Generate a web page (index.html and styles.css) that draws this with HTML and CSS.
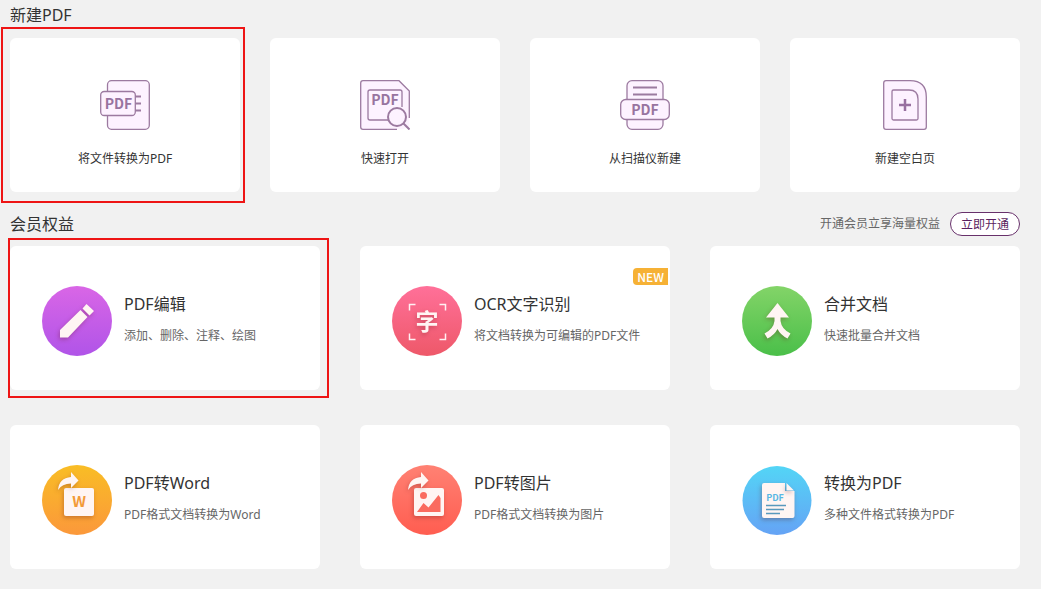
FILE: index.html
```html
<!DOCTYPE html>
<html lang="zh-CN">
<head>
<meta charset="utf-8">
<meta name="viewport" content="width=device-width, initial-scale=1">
<title>新建PDF</title>
<link rel="stylesheet" href="styles.css">
</head>
<body>
<main class="home">
  <section>
    <header class="section-head section-head-first">
      <h2 class="section-title">新建PDF</h2>
    </header>
    <div class="create-grid">
      <button class="card create-card marked marked-create" type="button">
        <svg class="create-icon" viewBox="0 0 50 50" aria-hidden="true">
          <rect class="sheet" x="7.5" y="0.7" width="41.8" height="48.6" rx="4"/>
          <path class="mark" d="M35 16.5h6M35 23.5h6M35 30.5h6"/>
          <rect class="sheet" x="0.7" y="11.5" width="34.6" height="24" rx="3.5"/>
          <text class="icon-text" x="18.500" y="28.5">PDF</text>
        </svg>
        <span>将文件转换为PDF</span>
      </button>
      <button class="card create-card" type="button">
        <svg class="create-icon" viewBox="0 0 50 50" aria-hidden="true">
          <path class="fill" d="M3 .7h36L49.3 11v36L42 49.3H3q-2.300 0-2.300-2.300V3Q.7.7 3 .7z"/>
          <path class="line" d="M49.300 38V11L39 .7H3Q.7.7.7 3v44q0 2.300 2.300 2.300h34"/>
          <path class="line" d="M42 27V12q0-2-2-2H10q-2 0-2 2v26q0 2 2 2h18"/>
          <text class="icon-text" x="25" y="25">PDF</text>
          <circle class="lens" cx="37" cy="37" r="9"/>
          <path class="mark" d="M43.500 43.500l6 6"/>
        </svg>
        <span>快速打开</span>
      </button>
      <button class="card create-card" type="button">
        <svg class="create-icon" viewBox="0 0 50 50" aria-hidden="true">
          <rect class="sheet" x="7" y="0.7" width="36" height="48.6" rx="5"/>
          <path class="mark" d="M13 7.500h24M13 14.500h24"/>
          <rect class="sheet" x="0.7" y="19.5" width="48.6" height="20" rx="5"/>
          <text class="icon-text" x="25" y="35">PDF</text>
        </svg>
        <span>从扫描仪新建</span>
      </button>
      <button class="card create-card" type="button">
        <svg class="create-icon" viewBox="0 0 50 50" aria-hidden="true">
          <path class="sheet" d="M6 .7h24Q46.300.7 46.300 17v30q0 2.300-2.300 2.300H6q-2.300 0-2.300-2.300V3Q3.700.7 6 .7z"/>
          <path class="sheet" d="M13.500 10H29q9 0 9 9v19.500q0 1.500-1.500 1.500h-23q-1.500 0-1.500-1.500v-27q0-1.500 1.500-1.500z"/>
          <path class="plus" d="M25 19v12M19 25h12"/>
        </svg>
        <span>新建空白页</span>
      </button>
    </div>
  </section>

  <section>
    <header class="section-head">
      <h2 class="section-title">会员权益</h2>
      <div class="offer">
        <span class="offer-text">开通会员立享海量权益</span>
        <button class="offer-button" type="button">立即开通</button>
      </div>
    </header>
    <div class="member-grid">
      <button class="card member-card marked marked-member" type="button">
        <svg class="member-icon" viewBox="0 0 70 70" aria-hidden="true">
          <defs><linearGradient id="purple" x2="0" y2="1"><stop stop-color="#d966e6"/><stop offset="1" stop-color="#b054e8"/></linearGradient></defs>
          <circle cx="35" cy="35" r="35" fill="url(#purple)"/>
          <g class="raised"><path d="M18 44L38.500 24l7 7L26 51.500h-8zM40.500 22.500l4-4.500 7.500 7-4.500 4.500z"/></g>
        </svg>
        <span class="member-copy"><span class="member-title">PDF编辑</span><span class="member-desc">添加、删除、注释、绘图</span></span>
      </button>
      <button class="card member-card" type="button">
        <svg class="member-icon" viewBox="0 0 70 70" aria-hidden="true">
          <defs><linearGradient id="pink" x2="0" y2="1"><stop stop-color="#ff7099"/><stop offset="1" stop-color="#ee5869"/></linearGradient></defs>
          <circle cx="35" cy="35" r="35" fill="url(#pink)"/>
          <path class="corners" d="M17.500 24.500v-6h6M47.500 18.500h6v6M17.500 47.500v6h6M47.500 53.500h6v-6"/>
          <g class="raised"><text class="scan-text" x="35" y="44">字</text></g>
        </svg>
        <span class="member-copy"><span class="member-title">OCR文字识别</span><span class="member-desc">将文档转换为可编辑的PDF文件</span></span>
        <span class="badge">NEW</span>
      </button>
      <button class="card member-card" type="button">
        <svg class="member-icon" viewBox="0 0 70 70" aria-hidden="true">
          <defs><linearGradient id="green" x2="0" y2="1"><stop stop-color="#83d468"/><stop offset="1" stop-color="#4abf49"/></linearGradient></defs>
          <circle cx="35" cy="35" r="35" fill="url(#green)"/>
          <g class="raised"><path d="M35.500 17L47 31.500h-8.500V35q1 8 10 12.500l-3 5q-7-3.500-10-9.500-3 6-10 9.500l-3-5q9-4.500 10-12.500v-3.500H24z"/></g>
        </svg>
        <span class="member-copy"><span class="member-title">合并文档</span><span class="member-desc">快速批量合并文档</span></span>
      </button>
      <button class="card member-card" type="button">
        <svg class="member-icon" viewBox="0 0 70 70" aria-hidden="true">
          <defs><linearGradient id="orange" x2="0" y2="1"><stop stop-color="#f9bd25"/><stop offset="1" stop-color="#fb983b"/></linearGradient></defs>
          <circle cx="35" cy="35" r="35" fill="url(#orange)"/>
          <g class="raised"><rect x="22" y="23" width="30" height="28" rx="2"/></g>
          <g class="raised"><path d="M16 25q1-12 13-13V7l7.500 8.500-7.500 7.500v-4.500Q20 18.500 16 25z"/></g>
          <text class="word-text" x="37" y="42">W</text>
        </svg>
        <span class="member-copy"><span class="member-title">PDF转Word</span><span class="member-desc">PDF格式文档转换为Word</span></span>
      </button>
      <button class="card member-card" type="button">
        <svg class="member-icon" viewBox="0 0 70 70" aria-hidden="true">
          <defs><linearGradient id="red" x2="0" y2="1"><stop stop-color="#ff8173"/><stop offset="1" stop-color="#ff5d50"/></linearGradient></defs>
          <circle cx="35" cy="35" r="35" fill="url(#red)"/>
          <g class="raised"><rect x="22" y="23" width="30" height="28" rx="2"/></g>
          <g class="raised"><path d="M16 25q1-12 13-13V7l7.500 8.500-7.500 7.500v-4.500Q20 18.500 16 25z"/></g>
          <circle class="photo" cx="31.500" cy="30.500" r="3.500"/>
          <path class="photo" d="M25 47l6.500-9 5 4.500 10-12.500 2 3V47z"/>
        </svg>
        <span class="member-copy"><span class="member-title">PDF转图片</span><span class="member-desc">PDF格式文档转换为图片</span></span>
      </button>
      <button class="card member-card" type="button">
        <svg class="member-icon" viewBox="0 0 70 70" aria-hidden="true">
          <defs><linearGradient id="blue" x2="0" y2="1"><stop stop-color="#53d5f6"/><stop offset="1" stop-color="#65a3f5"/></linearGradient></defs>
          <circle cx="35" cy="35.500" r="34.500" fill="url(#blue)"/>
          <g class="raised"><path d="M22 18h21v8h9.500v25q0 2-2 2H22q-2 0-2-2V20q0-2 2-2z"/></g>
          <g class="raised"><path d="M44.500 18l7.500 7.500h-7.500z"/></g>
          <text class="file-text" x="33" y="36">PDF</text>
          <path class="file-lines" d="M24 40.500h20M24 44.500h18M24 48.500h14"/>
        </svg>
        <span class="member-copy"><span class="member-title">转换为PDF</span><span class="member-desc">多种文件格式转换为PDF</span></span>
      </button>
    </div>
  </section>
</main>
</body>
</html>
```
FILE: styles.css
```css
* { box-sizing: border-box; }

body {
  margin: 0;
  background: #f1f1f1;
  color: #333;
  font-family: "Noto Sans", "Noto Sans CJK SC", sans-serif;
  font-size: 12px;
}

button {
  border: 0;
  color: inherit;
  font: inherit;
  cursor: pointer;
}

.home { padding: 0 21px 20px 10px; }

.section-head {
  display: flex;
  align-items: center;
  justify-content: space-between;
  height: 54px;
  padding-top: 10px;
}

.section-head-first { height: 38px; padding: 0 0 8px; }

.section-title {
  margin: 0;
  font-size: 16px;
  font-weight: 400;
  line-height: 24px;
}

.offer { display: flex; align-items: center; gap: 10px; }
.offer-text { color: #666; line-height: 20px; }

.offer-button {
  height: 24px;
  padding: 1px 10px 0;
  border: 1px solid #68316b;
  border-radius: 12px;
  background: #fff;
  color: #5b1f60;
  line-height: 21px;
}

.card {
  position: relative;
  display: flex;
  align-items: center;
  border-radius: 6px;
  background: #fff;
}

.create-grid {
  display: grid;
  grid-template-columns: repeat(4, 1fr);
  gap: 30px;
}

.create-card {
  flex-direction: column;
  gap: 19px;
  padding: 42px 12px 23px;
  line-height: 20px;
}

.create-icon { width: 50px; height: 50px; }

.member-grid {
  display: grid;
  grid-template-columns: repeat(3, 1fr);
  gap: 35px 40px;
}

.member-card {
  gap: 12px;
  padding: 40px 20px 34px 32px;
  text-align: left;
}

.member-icon { flex: none; width: 70px; height: 70px; overflow: visible; }

.member-copy {
  display: flex;
  flex-direction: column;
  gap: 10px;
  padding-bottom: 4px;
}

.member-title { font-size: 16px; line-height: 24px; }
.member-desc { color: #666; line-height: 20px; }

.badge {
  position: absolute;
  top: 22px;
  right: 2px;
  padding: 0 4px;
  border-radius: 4px 0 0 4px;
  background: #f6b135;
  color: #fff;
  font-family: "Noto Sans CJK SC", sans-serif;
  font-weight: 500;
  line-height: 17px;
}

.marked::after {
  content: "";
  position: absolute;
  border: 2px solid #ee1515;
  pointer-events: none;
}

.marked-create::after { inset: -11px -5px -11px -9px; }
.marked-member::after { inset: -8px -9px -8px -2px; }

.sheet { fill: #fdf2ff; stroke: #9c7aa0; stroke-width: 1.3; }
.fill { fill: #fdf2ff; }
.line { fill: none; stroke: #9c7aa0; stroke-width: 1.3; }
.mark { fill: none; stroke: #9c7aa0; stroke-width: 2; }
.lens { fill: #fdf2ff; stroke: #9c7aa0; stroke-width: 2; }
.plus { fill: none; stroke: #9870a0; stroke-width: 2.5; }

.icon-text,
.scan-text,
.word-text,
.file-text {
  font-family: "Noto Sans CJK SC", sans-serif;
  font-weight: 700;
  text-anchor: middle;
}

.icon-text { fill: #9874a0; font-size: 14px; }
.scan-text { font-size: 23px; }
.word-text { fill: #f29a38; font-size: 15px; }
.file-text { fill: #58b7e4; font-size: 9px; }

.raised { fill: #fff5f3; filter: drop-shadow(-1px 2px 2px rgb(100 20 20 / 30%)); }
.corners { fill: none; stroke: #fff0f2; stroke-width: 1.5; }
.photo { fill: #fa6b5f; }
.file-lines { fill: none; stroke: #5999bd; stroke-width: 1.3; }
```
